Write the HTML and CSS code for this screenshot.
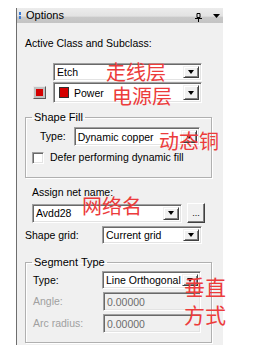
FILE: index.html
```html
<!DOCTYPE html>
<html lang="en">
<head>
    <meta charset="UTF-8">
    <meta name="viewport" content="width=device-width, initial-scale=1.0">
    <title>Options</title>
    <link rel="stylesheet" href="styles.css">
</head>
<body>
    <div class="panel">
        <div class="titlebar">
            <span class="grip"><i></i><i></i></span>
            <span class="title">Options</span>
            <svg class="pin" width="8" height="9" viewBox="0 0 8 9">
                <path d="M2 0.5h3v4h-3z M0 5.5h7 M3.5 5.5v3.5" fill="none" stroke="#000" stroke-width="1"/>
            </svg>
            <svg class="menu-arrow" width="7" height="4" viewBox="0 0 7 4">
                <path d="M0 0h7l-3.5 4z" fill="#000"/>
            </svg>
        </div>

        <div class="content">
            <div class="label first-label">Active Class and Subclass:</div>

            <div class="row class-row">
                <div class="combo etch-combo">
                    <span class="value">Etch</span>
                    <span class="drop"></span>
                </div>
            </div>

            <div class="row subclass-row">
                <div class="swatch-btn"><span class="swatch"></span></div>
                <div class="combo power-combo">
                    <span class="chip"></span>
                    <span class="value">Power</span>
                    <span class="drop"></span>
                </div>
            </div>

            <fieldset class="group fill-group">
                <legend>Shape Fill</legend>
                <div class="row fill-type-row">
                    <span class="label fill-type-label">Type:</span>
                    <div class="combo fill-type-combo">
                        <span class="value">Dynamic copper</span>
                        <span class="drop"></span>
                    </div>
                </div>
                <div class="row defer-row">
                    <span class="checkbox"></span>
                    <span class="label">Defer performing dynamic fill</span>
                </div>
            </fieldset>

            <div class="label net-label">Assign net name:</div>
            <div class="row net-row">
                <div class="combo net-combo">
                    <span class="value">Avdd28</span>
                    <span class="drop"></span>
                </div>
                <div class="browse-btn">...</div>
            </div>

            <div class="row grid-row">
                <span class="label grid-label">Shape grid:</span>
                <div class="combo grid-combo">
                    <span class="value">Current grid</span>
                    <span class="drop"></span>
                </div>
            </div>

            <fieldset class="group segment-group">
                <legend>Segment Type</legend>
                <div class="row seg-row seg-type-row">
                    <span class="label seg-label">Type:</span>
                    <div class="combo seg-combo">
                        <span class="value">Line Orthogonal</span>
                        <span class="drop"></span>
                    </div>
                </div>
                <div class="row seg-row seg-angle-row">
                    <span class="label seg-label disabled">Angle:</span>
                    <div class="field disabled">0.00000</div>
                </div>
                <div class="row seg-row seg-arc-row">
                    <span class="label seg-label disabled">Arc radius:</span>
                    <div class="field disabled">0.00000</div>
                </div>
            </fieldset>
        </div>

        <!-- red notes written over the dialog -->
        <div class="note note-etch">走线层</div>
        <div class="note note-power">电源层</div>
        <div class="note note-fill">动态铜</div>
        <div class="note note-net">网络名</div>
        <div class="note note-seg1">垂直</div>
        <div class="note note-seg2">方式</div>
    </div>
</body>
</html>
```

FILE: styles.css
```css
/* General styles */
body {
    margin: 0;
    background-color: #fff;
    font-family: "Liberation Sans", Arial, sans-serif;
    font-size: 10.5px;
    color: #000;
}

.panel {
    position: relative;
    margin: 8px 0 0 16px;
    width: 206px;
    height: 337px;
    border-left: 1px solid #6e6e6e;
    background-color: #f0f0f0;
}

/* Title bar */
.titlebar {
    display: flex;
    align-items: center;
    height: 15px;
    background: linear-gradient(#ececec 0%, #e2e2e2 55%, #c9c9c9 60%, #c4c4c4 100%);
}

.grip {
    display: flex;
    flex-direction: column;
    gap: 1px;
    margin: 0 0 0 2px;
}

.grip i {
    display: block;
    width: 2px;
    height: 3px;
    background-color: #3a7bd5;
}

.title {
    margin-left: 5px;
    font-size: 11px;
    line-height: 15px;
}

.pin {
    margin-left: auto;
    margin-top: 3px;
}

.menu-arrow {
    margin: 0 3px 0 10px;
}

/* Content */
.content {
    padding-left: 8px;
}

.label {
    line-height: 13px;
    white-space: nowrap;
}

.disabled {
    color: #a0a0a0;
}

.first-label {
    margin-top: 14px;
}

.row {
    display: flex;
    align-items: center;
}

/* Sunken combo and edit fields */
.combo,
.field {
    display: flex;
    align-items: center;
    box-sizing: border-box;
    background-color: #fff;
    border: 1px solid;
    border-color: #a0a0a0 #fff #fff #a0a0a0;
    box-shadow: inset 1px 1px #696969, inset -1px -1px #e3e3e3;
}

.value {
    flex: 1;
    padding-left: 3px;
    white-space: nowrap;
    overflow: hidden;
}

.drop {
    position: relative;
    box-sizing: border-box;
    width: 16px;
    height: calc(100% - 4px);
    margin-right: 2px;
    background-color: #f0f0f0;
    border: 1px solid;
    border-color: #f0f0f0 #404040 #404040 #f0f0f0;
    box-shadow: inset 1px 1px #fff, inset -1px -1px #808080;
}

.drop::after {
    content: "";
    position: absolute;
    left: 4px;
    top: 50%;
    margin-top: -2px;
    border-left: 3.5px solid transparent;
    border-right: 3.5px solid transparent;
    border-top: 4px solid #000;
}

.class-row {
    margin-top: 13px;
}

.etch-combo {
    margin-left: 28px;
    width: 149px;
    height: 18px;
}

.subclass-row {
    margin-top: 1px;
}

.swatch-btn {
    box-sizing: border-box;
    width: 13px;
    height: 13px;
    margin-left: 8px;
    padding: 2px;
    background-color: #c0c0c0;
    border: 1px solid;
    border-color: #e8e8e8 #5a5a5a #5a5a5a #e8e8e8;
}

.swatch {
    display: block;
    width: 100%;
    height: 100%;
    background-color: #d40000;
}

.power-combo {
    margin-left: 7px;
    width: 149px;
    height: 21px;
}

.chip {
    box-sizing: border-box;
    width: 10px;
    height: 11px;
    margin-left: 5px;
    background-color: #d40000;
    border: 1px solid #303030;
}

.power-combo .value {
    padding-left: 5px;
}

/* Group boxes */
.group {
    box-sizing: border-box;
    width: 187px;
    margin: 0;
    padding: 0;
    border: 1px solid #b0b0b0;
    box-shadow: inset 1px 1px #fff, 1px 1px #fff;
}

.group legend {
    margin-left: 6px;
    padding: 0 2px;
    line-height: 13px;
    font-size: 11px;
}

.fill-group {
    margin-top: 8px;
    padding-bottom: 13px;
}

.fill-type-row {
    margin-top: 3px;
}

.fill-type-label {
    margin-left: 14px;
}

.fill-type-combo {
    margin-left: 8px;
    width: 126px;
    height: 19px;
}

.defer-row {
    margin-top: 5px;
}

.checkbox {
    box-sizing: border-box;
    width: 12px;
    height: 12px;
    margin-left: 6px;
    background-color: #fff;
    border: 1px solid;
    border-color: #a0a0a0 #fff #fff #a0a0a0;
    box-shadow: inset 1px 1px #696969, inset -1px -1px #e3e3e3;
}

.defer-row .label {
    margin-left: 6px;
}

.net-label {
    margin: 8px 0 0 7px;
}

.net-row {
    margin-top: 4px;
    padding-left: 7px;
}

.net-combo {
    width: 150px;
    height: 19px;
}

.browse-btn {
    box-sizing: border-box;
    width: 18px;
    height: 20px;
    margin-left: 5px;
    padding-top: 3px;
    text-align: center;
    line-height: 13px;
    font-size: 9px;
    border: 1px solid;
    border-color: #fff #404040 #404040 #fff;
    box-shadow: inset -1px -1px #808080;
}

.grid-row {
    margin-top: 3px;
}

.grid-label {
    width: 77px;
}

.grid-combo {
    width: 100px;
    height: 18px;
}

.segment-group {
    margin-top: 12px;
    padding-bottom: 9px;
}

.seg-row {
    margin-top: 3px;
}

.seg-type-row {
    margin-top: 2px;
}

.seg-label {
    width: 69px;
    margin-left: 7px;
}

.seg-combo {
    width: 99px;
    height: 18px;
}

.field {
    width: 98px;
    height: 19px;
    margin-left: 1px;
    padding-left: 3px;
}

.field.disabled {
    background-color: #f0f0f0;
    color: #6d6d6d;
}

/* Red hand-written notes */
.note {
    position: absolute;
    font-family: "Noto Sans CJK SC", sans-serif;
    font-size: 20px;
    line-height: 20px;
    color: #ec3b3b;
    white-space: nowrap;
}

.note-etch {
    left: 89px;
    top: 54px;
}

.note-power {
    left: 95px;
    top: 78px;
}

.note-fill {
    left: 142px;
    top: 123px;
}

.note-net {
    left: 65px;
    top: 188px;
}

.note-seg1 {
    left: 167px;
    top: 268px;
    font-size: 21px;
}

.note-seg2 {
    left: 167px;
    top: 296px;
    font-size: 21px;
}
```
